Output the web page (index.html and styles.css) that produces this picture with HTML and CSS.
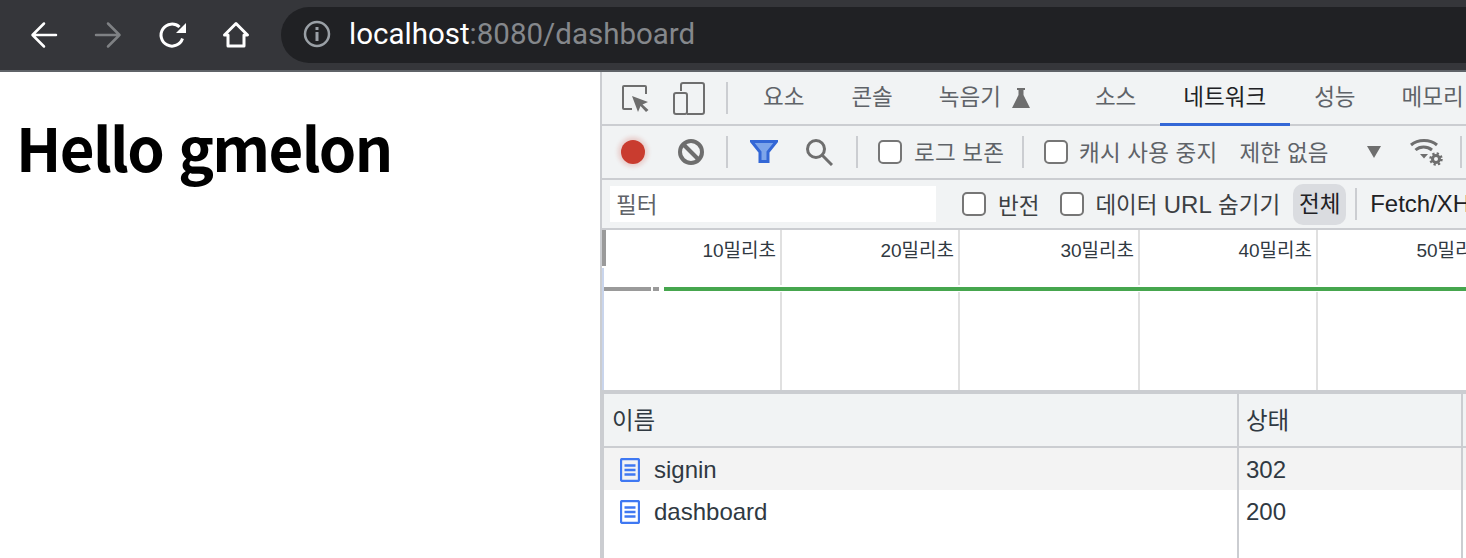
FILE: index.html
```html
<!DOCTYPE html>
<html lang="ko">
<head>
<meta charset="utf-8">
<title>dashboard</title>
<link rel="stylesheet" href="styles.css">
</head>
<body>
<header class="chrome">
  <nav class="nav-buttons">
    <svg class="nav-icon" viewBox="0 0 28 28"><path d="M26 14H3M14 2.500 2.500 14 14 25.500" class="st-white"/></svg>
    <svg class="nav-icon" viewBox="0 0 28 28"><path d="M2 14h23.500M14 2.500 25.500 14 14 25.500" class="st-dim"/></svg>
    <svg class="nav-icon" viewBox="0 0 28 28"><path d="M24.500 17.500A11 11 0 1 1 21.500 6" class="st-reload"/><path d="M28 2v10H18z" class="fill-white"/></svg>
    <svg class="nav-icon" viewBox="0 0 28 28"><path d="M2.500 14 14 2.500 25.500 14H22v11H6V14z" class="st-home"/></svg>
  </nav>
  <div class="omnibox">
    <svg class="info-icon" viewBox="0 0 28 28"><circle cx="14" cy="14" r="12" class="st-info"/><path d="M12.500 7h3v3h-3zM12.500 12h3v9h-3z" class="fill-info"/></svg>
    <span class="url-host">localhost</span><span class="url-rest">:8080/dashboard</span>
  </div>
</header>
<main class="split">
  <section class="page">
    <h1 class="greeting">Hello gmelon</h1>
  </section>
  <section class="devtools">
    <div class="bar tabs">
      <svg class="tool inspect" viewBox="0 0 28 27"><path d="M10 24H2a1 1 0 0 1-1-1V2a1 1 0 0 1 1-1h21a1 1 0 0 1 1 1v7" class="st-tool"/><path d="M10 11l16 6-5.500 2.500 6 5.500-2.500 2-5.500-6L16 27z" class="fill-tool"/></svg>
      <svg class="tool device" viewBox="0 0 32 33"><path d="M8 9V3a2 2 0 0 1 2-2h19a2 2 0 0 1 2 2v27a2 2 0 0 1-2 2H14" class="st-tool"/><rect x="1" y="11" width="13" height="21" rx="2" class="st-tool"/></svg>
      <span class="divider tab-div"></span>
      <span class="tab t1">요소</span>
      <span class="tab t2">콘솔</span>
      <span class="tab t3">녹음기</span>
      <svg class="flask" viewBox="0 0 18 20"><path d="M5 0h8v2h-1.500v5L18 20H0L6.500 7V2H5z" class="fill-tool"/></svg>
      <span class="tab t4">소스</span>
      <span class="tab active">네트워크</span>
      <span class="tab t6">성능</span>
      <span class="tab t7">메모리</span>
    </div>
    <div class="bar actions">
      <span class="record"></span>
      <svg class="tool clear" viewBox="0 0 26 26"><circle cx="13" cy="13" r="11" class="st-heavy"/><path d="M5 5l16 16" class="st-heavy"/></svg>
      <span class="divider d2"></span>
      <svg class="tool funnel" viewBox="0 0 28 24"><path d="M1.500 1.500h25L18 12v9.500h-8V12z" class="funnel-shape"/></svg>
      <svg class="tool search" viewBox="0 0 28 28"><circle cx="11" cy="11" r="8.500" class="st-heavy-thin"/><path d="M17 17l10 10" class="st-heavy-thin"/></svg>
      <span class="divider d3"></span>
      <span class="check c1"></span><span class="label l1">로그 보존</span>
      <span class="divider d4"></span>
      <span class="check c2"></span><span class="label l2">캐시 사용 중지</span>
      <span class="label l3">제한 없음</span>
      <span class="caret"></span>
      <svg class="tool wifi" viewBox="0 0 34 28"><path d="M1 7C8 1 20 1 27 7" class="st-wifi"/><path d="M5.500 12C10 8 17 8 22 12" class="st-wifi"/><path d="M10 16h8l-4 4.500z" class="fill-tool"/><circle cx="26" cy="21" r="5.500" class="gear-teeth"/><circle cx="26" cy="21" r="3.500" class="gear-ring"/></svg>
      <span class="divider d5"></span>
    </div>
    <div class="bar filters">
      <span class="filter-input">필터</span>
      <span class="check c3"></span><span class="label dark l4">반전</span>
      <span class="check c4"></span><span class="label dark l5">데이터 <span class="latin">URL</span> 숨기기</span>
      <span class="pill">전체</span>
      <span class="divider d6"></span>
      <span class="label black l6">Fetch/XHR</span>
    </div>
    <div class="timeline">
      <div class="ticks ruler">
        <span class="cell c-a">10밀리초</span><span class="cell c-b">20밀리초</span><span class="cell c-c">30밀리초</span><span class="cell c-b">40밀리초</span><span class="cell c-b">50밀리초</span>
      </div>
      <div class="waterfall">
        <span class="seg seg-1"></span><span class="seg seg-2"></span><span class="seg seg-3"></span>
      </div>
      <div class="ticks graph">
        <span class="cell c-a"></span><span class="cell c-b"></span><span class="cell c-c"></span><span class="cell c-b"></span><span class="cell c-b"></span>
      </div>
      <span class="marker"></span>
      <span class="cursor-line"></span>
    </div>
    <div class="table">
      <div class="row head"><span class="col-name">이름</span><span class="col-status">상태</span><span class="col-rest"></span></div>
      <div class="row odd"><span class="col-name"><svg class="doc" viewBox="0 0 20 24"><path d="M2.500 1h15A1.500 1.500 0 0 1 19 2.500v19a1.500 1.500 0 0 1-1.500 1.500h-15A1.500 1.500 0 0 1 1 21.500v-19A1.500 1.500 0 0 1 2.500 1z" class="doc-line"/><path d="M4.500 7.500h11M4.500 12h11M4.500 16.500h11" class="doc-line"/></svg>signin</span><span class="col-status">302</span><span class="col-rest"></span></div>
      <div class="row"><span class="col-name"><svg class="doc" viewBox="0 0 20 24"><path d="M2.500 1h15A1.500 1.500 0 0 1 19 2.500v19a1.500 1.500 0 0 1-1.500 1.500h-15A1.500 1.500 0 0 1 1 21.500v-19A1.500 1.500 0 0 1 2.500 1z" class="doc-line"/><path d="M4.500 7.500h11M4.500 12h11M4.500 16.500h11" class="doc-line"/></svg>dashboard</span><span class="col-status">200</span><span class="col-rest"></span></div>
      <div class="row filler"><span class="col-name"></span><span class="col-status"></span><span class="col-rest"></span></div>
    </div>
  </section>
</main>
</body>
</html>
```
FILE: styles.css
```css
* { box-sizing: border-box; }
html, body { margin: 0; height: 558px; overflow: hidden; background: #fff; }
body { font-family: "Liberation Sans", "Noto Sans CJK KR", sans-serif; display: flex; flex-direction: column; }

.chrome { flex: none; height: 72px; background: #35363a; border-bottom: 2px solid #5f6368; display: flex; align-items: center; padding-left: 30px; overflow: hidden; }
.nav-buttons { display: flex; gap: 36px; flex: none; }
.nav-icon { width: 28px; height: 28px; }
.st-white, .st-dim { fill: none; stroke: #fff; stroke-width: 2.500; stroke-linecap: round; stroke-linejoin: round; }
.st-dim { stroke: #7f8184; }
.st-reload { fill: none; stroke: #fff; stroke-width: 3; }
.st-home { fill: none; stroke: #fff; stroke-width: 3; stroke-linejoin: round; }
.fill-white { fill: #fff; }
.omnibox { flex: none; width: 1300px; height: 56px; margin-left: 31px; background: #202124; border-radius: 28px; display: flex; align-items: center; padding-left: 22px; padding-bottom: 2px; font-family: Roboto, sans-serif; font-size: 29.500px; }
.info-icon { width: 28px; height: 28px; margin-right: 18px; }
.st-info { fill: none; stroke: #9aa0a6; stroke-width: 2.500; }
.fill-info { fill: #9aa0a6; }
.url-host { color: #fff; }
.url-rest { color: #85888c; }

.split { flex: 1; display: flex; min-height: 0; }
.page { flex: none; width: 600px; }
.greeting { margin: 39px 0 0 16px; font-family: "Noto Sans CJK KR", sans-serif; font-weight: 700; font-size: 60px; line-height: 70px; color: #000; letter-spacing: -1.700px; }

.devtools { flex: 1; min-width: 0; border-left: 2px solid #cbcdd1; display: flex; flex-direction: column; overflow: hidden; font-family: "Liberation Sans", "Noto Sans CJK KR", sans-serif; font-size: 22.500px; color: #5f6368; }
.bar { flex: none; display: flex; align-items: center; white-space: nowrap; background: #f1f3f4; border-bottom: 2px solid #cbcdd1; }
.tabs { height: 54px; position: relative; }
.actions { height: 54px; }
.filters { height: 50px; }

.tool { flex: none; display: block; }
.st-tool { fill: none; stroke: #6e6e6e; stroke-width: 2; }
.fill-tool { fill: #6e6e6e; }
.inspect { width: 28px; height: 27px; margin-left: 20px; margin-top: 1px; }
.device { width: 32px; height: 33px; margin-left: 23px; }
.divider { flex: none; width: 2px; height: 32px; background: #cbcdd1; }
.tab-div { margin-left: 21px; }
.tab { flex: none; color: #5f6368; height: 52px; line-height: 52px; }
.t1 { margin-left: 35px; }
.t2 { margin-left: 47px; }
.t3 { margin-left: 46px; }
.flask { width: 18px; height: 20px; margin-left: 11px; flex: none; }
.t4 { margin-left: 65px; }
.active { margin-left: 24px; padding: 0 24px 0 23px; color: #202124; border-bottom: 3px solid #3367d6; height: 54px; margin-bottom: -2px; line-height: 52px; }
.t6 { margin-left: 24px; }
.t7 { margin-left: 46px; }

.record { flex: none; width: 24px; height: 24px; margin-left: 19px; border-radius: 50%; background: #c93c2f; box-shadow: 0 0 4px 3px rgba(201, 60, 47, 0.2); }
.st-heavy { fill: none; stroke: #6e6e6e; stroke-width: 4; }
.st-heavy-thin { fill: none; stroke: #6e6e6e; stroke-width: 3; }
.clear { width: 26px; height: 26px; margin-left: 33px; }
.d2 { margin-left: 22px; }
.funnel { width: 28px; height: 24px; margin-left: 22px; }
.funnel-shape { fill: #7da5ea; stroke: #3367d6; stroke-width: 3; }
.search { width: 28px; height: 28px; margin-left: 27px; }
.d3 { margin-left: 23px; }
.check { flex: none; width: 24px; height: 24px; border: 2px solid #767676; border-radius: 5px; background: #fff; }
.c1 { margin-left: 20px; }
.label { flex: none; color: #5f6368; }
.actions .label { margin-bottom: 3px; }
.l1 { margin-left: 12px; letter-spacing: 0.200px; }
.d4 { margin-left: 18px; }
.c2 { margin-left: 20px; }
.l2 { margin-left: 11px; letter-spacing: 0.200px; }
.l3 { margin-left: 22px; }
.caret { flex: none; margin-left: 39px; border-left: 7px solid transparent; border-right: 7px solid transparent; border-top: 12px solid #6e6e6e; }
.wifi { width: 34px; height: 28px; margin-left: 29px; }
.st-wifi { fill: none; stroke: #6e6e6e; stroke-width: 3; }
.gear-teeth { fill: none; stroke: #6e6e6e; stroke-width: 2.500; stroke-dasharray: 2.200 2.120; }
.gear-ring { fill: #f1f3f4; stroke: #6e6e6e; stroke-width: 3; }
.d5 { margin-left: 16px; }

.filter-input { flex: none; width: 326px; height: 36px; line-height: 40px; margin-left: 8px; padding-left: 6px; background: #fff; color: #5f6368; }
.c3 { margin-left: 26px; }
.dark { color: #3c4043; }
.l4 { margin-left: 12px; }
.c4 { margin-left: 21px; }
.l5 { margin-left: 11px; margin-bottom: 3px; }
.latin { font-size: 24px; }
.pill { flex: none; width: 53px; height: 41px; line-height: 42px; text-align: center; margin-left: 13px; background: #dadce0; border-radius: 10px; color: #202124; }
.d6 { margin-left: 9px; }
.black { color: #202124; }
.l6 { margin-left: 13px; font-size: 24px; }

.timeline { flex: none; height: 160px; position: relative; background: #fff; display: flex; flex-direction: column; }
.ticks { display: flex; margin-left: 2px; }
.ruler { height: 55px; font-size: 19px; color: #303942; line-height: 41px; }
.graph { flex: 1; min-height: 0; }
.cell { flex: none; text-align: right; padding-right: 4px; border-right: 2px solid #e0e0e0; }
.c-a { width: 178px; }
.c-b { width: 178px; }
.c-c { width: 180px; }
.waterfall { flex: none; height: 7px; display: flex; align-items: center; padding-left: 1px; }
.seg { flex: none; height: 4px; }
.seg-1 { width: 48px; background: #9a9a9a; }
.seg-2 { width: 6px; margin-left: 2px; background: #9a9a9a; }
.seg-3 { width: 900px; margin-left: 5px; background: #46a64e; }
.marker { position: absolute; left: 0; top: 0; width: 4px; height: 36px; background: #9a9a9a; }
.cursor-line { position: absolute; left: 0; top: 38px; bottom: 0; width: 2px; background: #c9d5ec; }

.table { flex: 1; min-height: 0; display: flex; flex-direction: column; border-top: 4px solid #cbcdd1; border-left: 2px solid #cbcdd1; color: #303942; font-size: 24px; }
.row { flex: none; height: 42px; display: flex; line-height: 42px; background: #fff; }
.row.head { height: 54px; background: #f1f3f4; border-bottom: 2px solid #cbcdd1; font-size: 23.500px; }
.row.odd { background: #f3f3f3; }
.row.filler { flex: 1; }
.col-name { flex: none; width: 633px; padding-left: 8px; display: flex; align-items: center; padding-top: 1px; }
.col-status { flex: none; width: 226px; padding-left: 7px; padding-top: 1px; border-left: 2px solid #cbcdd1; border-right: 2px solid #cbcdd1; display: flex; align-items: center; }
.col-rest { flex: 1; }
.doc { flex: none; width: 20px; height: 24px; margin: 0 14px 0 8px; }
.doc-line { fill: none; stroke: #3f78f2; stroke-width: 2.300; }
```
